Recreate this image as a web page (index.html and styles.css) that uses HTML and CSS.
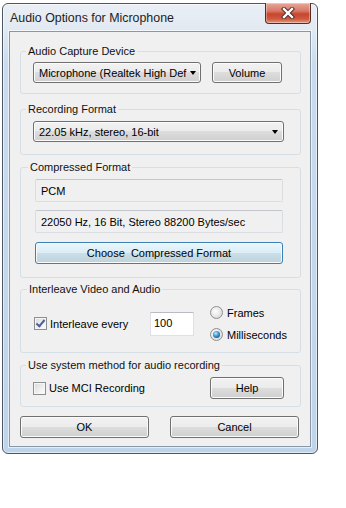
FILE: index.html
```html
<!DOCTYPE html>
<html lang="en">
<head>
    <meta charset="UTF-8">
    <meta name="viewport" content="width=device-width, initial-scale=1.0">
    <title>Audio Options for Microphone</title>
    <link rel="stylesheet" href="styles.css">
</head>
<body>
    <div class="window">
        <div class="titlebar">
            <span class="title">Audio Options for Microphone</span>
            <button class="close" title="Close">
                <svg width="14" height="12" viewBox="0 0 14 12">
                    <path d="M3 2 L11 10 M11 2 L3 10" stroke="#4a2a24" stroke-width="4.2" stroke-linecap="square"/>
                    <path d="M3 2 L11 10 M11 2 L3 10" stroke="#fff" stroke-width="2.4" stroke-linecap="square"/>
                </svg>
            </button>
        </div>
        <div class="client">
            <fieldset class="group g-device">
                <legend>Audio Capture Device</legend>
                <div class="row">
                    <div class="combo combo-device"><span>Microphone (Realtek High Def</span><i class="arrow"></i></div>
                    <button class="btn btn-volume">Volume</button>
                </div>
            </fieldset>

            <fieldset class="group g-format">
                <legend>Recording Format</legend>
                <div class="combo combo-format"><span>22.05 kHz, stereo, 16-bit</span><i class="arrow"></i></div>
            </fieldset>

            <fieldset class="group g-compressed">
                <legend>Compressed Format</legend>
                <div class="readonly">PCM</div>
                <div class="readonly">22050 Hz, 16 Bit, Stereo 88200 Bytes/sec</div>
                <button class="btn btn-default btn-choose">Choose&nbsp; Compressed Format</button>
            </fieldset>

            <fieldset class="group g-interleave">
                <legend>Interleave Video and Audio</legend>
                <div class="row">
                    <label class="check check-interleave"><span class="box checked"></span>Interleave every</label>
                    <div class="edit">100</div>
                    <div class="radios">
                        <label class="radio"><span class="dot"></span>Frames</label>
                        <label class="radio"><span class="dot selected"></span>Milliseconds</label>
                    </div>
                </div>
            </fieldset>

            <fieldset class="group g-system">
                <legend>Use system method for audio recording</legend>
                <div class="row">
                    <label class="check"><span class="box"></span>Use MCI Recording</label>
                    <button class="btn btn-help">Help</button>
                </div>
            </fieldset>

            <div class="actions">
                <button class="btn btn-action">OK</button>
                <button class="btn btn-action">Cancel</button>
            </div>
        </div>
    </div>
</body>
</html>
```

FILE: styles.css
```css
body { margin: 0; background: #fff; font-family: "Liberation Sans", Arial, sans-serif; font-size: 11px; color: #000; }

/* window frame */
.window { margin: 3px 0 0 2px; width: 316px; box-sizing: border-box; border: 1px solid #4c5664; border-radius: 6px; padding: 0 6px 6px; background: linear-gradient(#eaeff5 0, #e1e9f2 26px, #c9dbee 60px, #bed4eb 100%); box-shadow: inset 0 0 0 1px rgba(255,255,255,0.55); }
.titlebar { height: 27px; display: flex; justify-content: space-between; align-items: center; }
.title { font-size: 12.4px; color: #1e1e1e; padding-left: 1px; margin-top: 1px; }
.close { align-self: flex-start; margin-top: -1px; width: 46px; height: 21px; padding: 0; border: 1px solid #5a2a22; border-top: none; border-radius: 0 0 4px 4px; background: linear-gradient(#e9a799 0%, #d77a68 40%, #c7452e 55%, #cf5a40 80%, #e39a80 100%); box-shadow: inset 0 0 0 1px rgba(255,255,255,0.35); display: flex; align-items: center; justify-content: center; }
.close svg { display: block; }
.client { box-sizing: border-box; height: 416px; border: 1px solid #8a97a6; background: #f0f0f0; padding: 12px 9px 0 10px; box-shadow: 0 0 0 1px rgba(255,255,255,0.6); }

/* group boxes */
.group { margin: 0; width: 281px; box-sizing: border-box; min-width: 0; border: 1px solid #d5dfe5; border-radius: 3px; }
.group legend { padding: 0 2px; margin-left: -7px; line-height: 14px; color: #111; }
.g-device { padding: 4px 12px 10px; }
.g-format { margin-top: 8px; padding: 5px 12px 12px; }
.g-compressed { margin-top: 5px; padding: 5px 12px 13px 14px; }
.g-interleave { margin-top: 4px; padding: 10px 12px 11px 13px; }
.g-system { margin-top: 5px; padding: 5px 16px 7px 12px; }
.row { display: flex; align-items: center; }

/* buttons */
.btn { font: inherit; color: #000; height: 22px; padding: 0; border: 1px solid #707070; border-radius: 3px; background: linear-gradient(#f2f2f2 0%, #ebebeb 50%, #dddddd 50%, #cfcfcf 100%); box-shadow: inset 0 0 0 1px #fbfbfb; }
.btn-default { border-color: #3c7fb1; background: linear-gradient(#e9f5fb 0%, #dcedf6 50%, #cbdfe9 50%, #bed2dc 100%); }
.btn-volume { width: 70px; margin-left: 11px; height: 21px; }
.btn-choose { display: block; width: 248px; margin-top: 9px; }
.btn-help { width: 74px; margin-left: auto; }
.actions { display: flex; justify-content: space-between; width: 279px; margin-top: 9px; }
.btn-action { width: 129px; }

/* drop-down lists */
.combo { box-sizing: border-box; height: 21px; display: flex; align-items: center; justify-content: space-between; padding: 0 5px 0 5px; border: 1px solid #707070; border-radius: 3px; background: linear-gradient(#f2f2f2 0%, #ebebeb 50%, #dddddd 50%, #cfcfcf 100%); box-shadow: inset 0 0 0 1px #fbfbfb; white-space: nowrap; overflow: hidden; }
.combo-device { width: 168px; }
.combo-format { width: 251px; }
.arrow { width: 0; height: 0; border-left: 3.5px solid transparent; border-right: 3.5px solid transparent; border-top: 4px solid #000; margin-left: 4px; }

/* read-only fields */
.readonly { box-sizing: border-box; width: 248px; height: 23px; padding: 5px 5px 0; border: 1px solid #dadde2; border-top-color: #c3c7cd; border-radius: 2px; background: #f0f0f0; }
.readonly + .readonly { margin-top: 8px; }
.edit { box-sizing: border-box; width: 44px; height: 24px; padding: 4px 3px 0; border: 1px solid #dde1e6; border-top-color: #b9bdc3; background: #fff; }

/* check boxes and radios */
.check { display: flex; align-items: center; gap: 3px; white-space: nowrap; }
.check-interleave { width: 116px; }
.box { box-sizing: border-box; width: 13px; height: 13px; border: 1px solid #8e8f8f; background: linear-gradient(135deg, #d9d9d9, #f4f4f4 70%, #fff); box-shadow: inset 0 0 0 1px #f5f5f5; position: relative; }
.box.checked::after { content: ""; position: absolute; left: 3px; top: 0px; width: 3px; height: 7px; border: solid #4b5f9a; border-width: 0 2px 2px 0; transform: rotate(40deg); }
.radios { display: flex; flex-direction: column; gap: 9px; margin-left: 16px; }
.radio { display: flex; align-items: center; gap: 4px; height: 13px; }
.dot { box-sizing: border-box; width: 13px; height: 13px; border-radius: 50%; border: 1px solid #8e8f8f; background: radial-gradient(circle at 40% 40%, #fff 0%, #e8e8e8 50%, #cfcfcf 100%); display: flex; align-items: center; justify-content: center; }
.dot.selected::after { content: ""; width: 7px; height: 7px; border-radius: 50%; background: radial-gradient(circle at 40% 35%, #c8ecff 0%, #4fa8dc 35%, #1a5c91 75%, #123f66 100%); }
```
